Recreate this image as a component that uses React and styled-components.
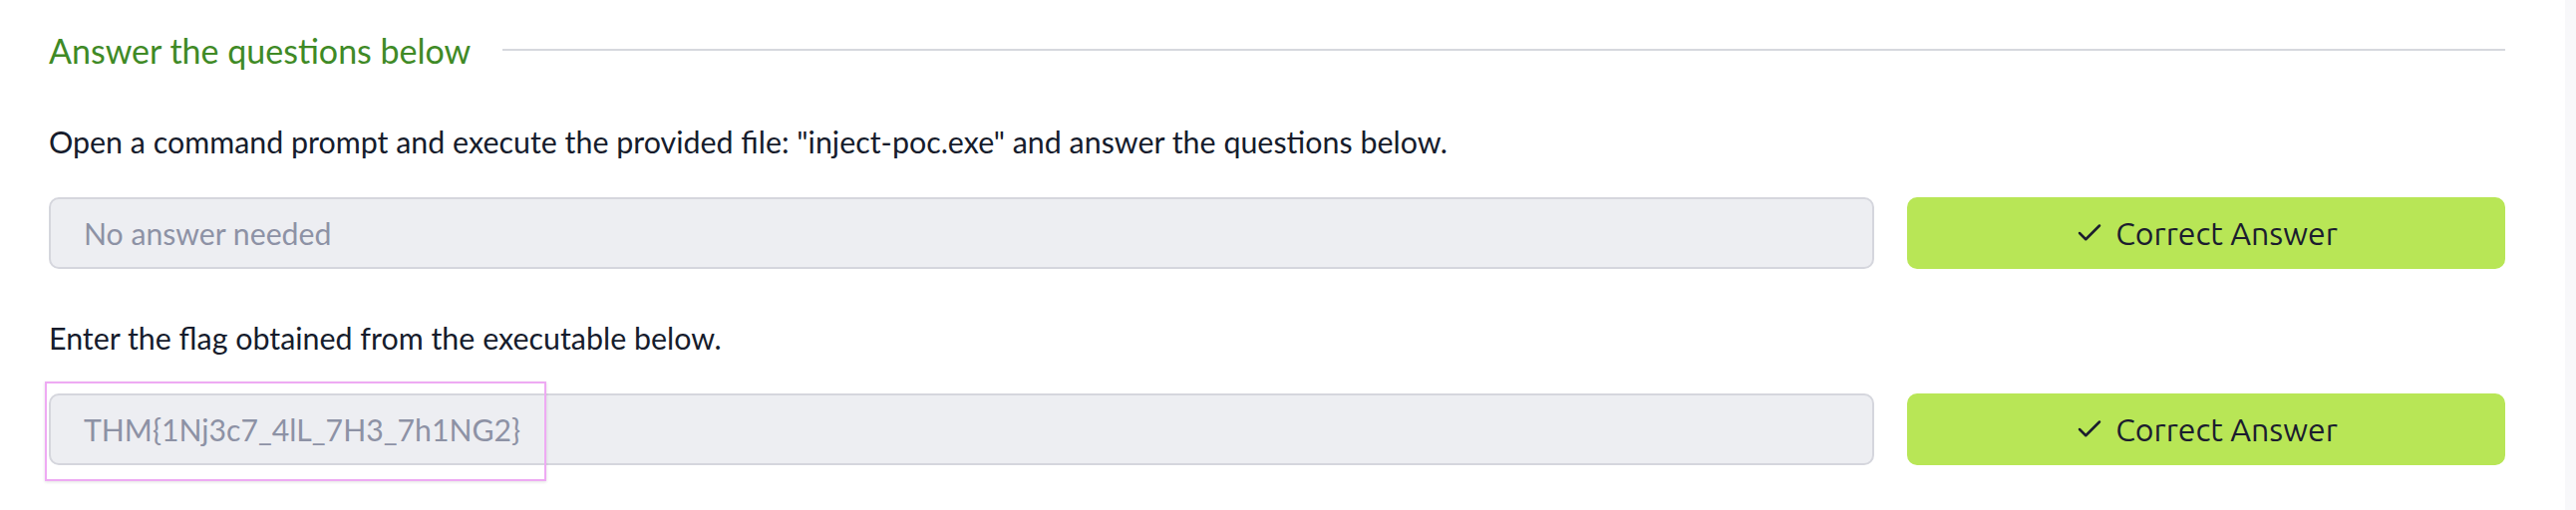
import React from 'react';
import styled, { createGlobalStyle } from 'styled-components';
import { Check } from 'lucide-react';

const GlobalStyle = createGlobalStyle`
  body {
    margin: 0;
    background: #ffffff;
  }
`;

const Page = styled.div`
  display: flex;
  min-height: 512px;
  font-family: 'Source Sans Pro', 'Lato', sans-serif;
`;

const Content = styled.div`
  flex: 1;
  padding: 28px 60px 0 49px;
`;

const ScrollTrack = styled.div`
  width: 11px;
  background: #f8f8fa;
`;

const HeadingRow = styled.div`
  display: flex;
  align-items: center;
  gap: 32px;
  height: 44px;
`;

const Heading = styled.h3`
  margin: 0;
  font-size: 34px;
  font-weight: 400;
  color: #3f8a26;
  white-space: nowrap;
`;

const Rule = styled.div`
  flex: 1;
  height: 2px;
  background: #d6d8de;
`;

const Question = styled.div`
  margin-top: ${p => p.$gap}px;
`;

const Prompt = styled.p`
  margin: 0;
  font-size: 30.4px;
  line-height: 44px;
  color: #161c2c;
`;

const AnswerRow = styled.div`
  display: grid;
  grid-template-columns: 1fr 600px;
  gap: 33px;
  margin-top: 34px;
  height: 72px;
`;

const Field = styled.div`
  position: relative;
`;

const AnswerInput = styled.input`
  box-sizing: border-box;
  width: 100%;
  height: 100%;
  padding: 0 33px;
  border: 2px solid #d5d6dd;
  border-radius: 10px;
  background: #edeef2;
  font-family: 'Source Sans Pro', 'Lato', sans-serif;
  font-size: 30.2px;
  color: #8d92a5;
  outline: none;
`;

const Highlight = styled.div`
  position: absolute;
  left: -4px;
  top: -12px;
  width: 503px;
  height: 100px;
  box-sizing: border-box;
  border: 2px solid #eeaaf3;
  box-shadow: 0 1px 3px rgba(0, 0, 0, 0.12);
  pointer-events: none;
`;

const SubmitButton = styled.button`
  display: flex;
  align-items: center;
  justify-content: center;
  gap: 11px;
  border: none;
  border-radius: 10px;
  background: #b8e656;
  color: #1b1d2e;
  font-family: 'Ubuntu', 'Noto Sans', sans-serif;
  font-size: 32px;
  cursor: pointer;
`;

const questions = [
  {
    text: 'Open a command prompt and execute the provided file: "inject-poc.exe" and answer the questions below.',
    answer: 'No answer needed',
    gap: 48,
  },
  {
    text: 'Enter the flag obtained from the executable below.',
    answer: 'THM{1Nj3c7_4lL_7H3_7h1NG2}',
    gap: 47,
    highlighted: true,
  },
];

export default function App() {
  return (
    <Page>
      <GlobalStyle />
      <Content>
        <HeadingRow>
          <Heading>Answer the questions below</Heading>
          <Rule />
        </HeadingRow>
        {questions.map((q, i) => (
          <Question key={i} $gap={q.gap}>
            <Prompt>{q.text}</Prompt>
            <AnswerRow>
              <Field>
                <AnswerInput readOnly value={q.answer} />
                {q.highlighted && <Highlight />}
              </Field>
              <SubmitButton>
                <Check size={30} strokeWidth={2} />
                Correct Answer
              </SubmitButton>
            </AnswerRow>
          </Question>
        ))}
      </Content>
      <ScrollTrack />
    </Page>
  );
}
